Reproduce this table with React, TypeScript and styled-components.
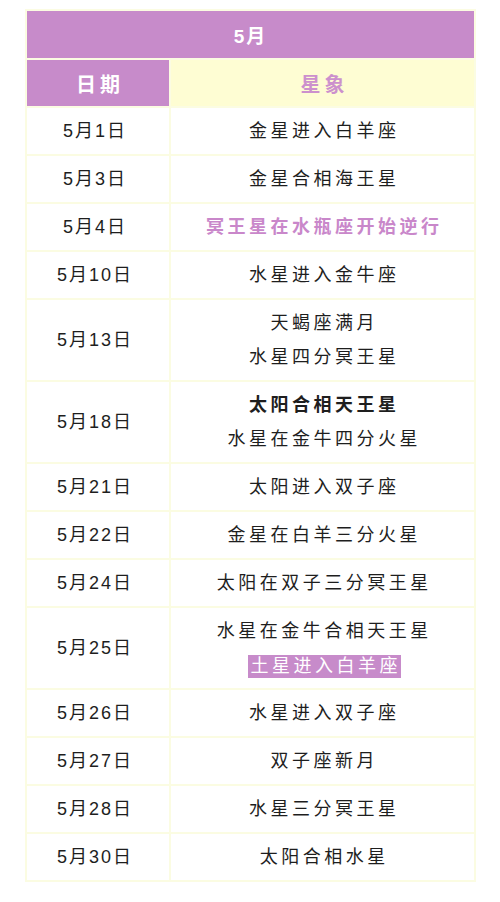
import { Fragment } from "react";
import styled, { createGlobalStyle } from "styled-components";

const GlobalStyle = createGlobalStyle`
  html, body {
    margin: 0;
    padding: 0;
    background: #ffffff;
  }
  body {
    font-family: "Liberation Sans", "Noto Sans CJK SC", sans-serif;
  }
`;

const purple = "#c78bca";
const cream = "#fbfce2";

const Page = styled.div`
  padding: 9px 0 0 25px;
`;

const Table = styled.div`
  width: 447px;
  display: grid;
  grid-template-columns: 142px 1fr;
  gap: 2px;
  padding: 2px;
  background: ${cream};
`;

const Title = styled.div`
  grid-column: 1 / 3;
  height: 47px;
  display: flex;
  align-items: center;
  justify-content: center;
  background: ${purple};
  color: #ffffff;
  font-size: 19px;
  font-weight: 700;
  letter-spacing: 2px;
`;

const HeadCell = styled.div<{ $alt?: boolean }>`
  height: 46px;
  display: flex;
  align-items: center;
  justify-content: center;
  background: ${({ $alt }) => ($alt ? "#fefdd3" : purple)};
  color: ${({ $alt }) => ($alt ? "#cc90cd" : "#ffffff")};
  font-size: 20px;
  font-weight: 700;
  letter-spacing: 4px;
  padding-left: 4px;
`;

const Cell = styled.div`
  background: #ffffff;
  display: flex;
  flex-direction: column;
  align-items: center;
  justify-content: center;
  gap: 1px;
  padding: 7px 0 6px 3.5px;
  color: #1e1e1e;
  font-size: 18px;
  line-height: 33px;
  letter-spacing: 3.5px;
`;

const DateCell = styled(Cell)`
  letter-spacing: 2px;
  padding-left: 0;
  padding-right: 6px;
`;

type Tone = "pink" | "bold" | "mark";

const Line = styled.span<{ $tone?: Tone }>`
  display: block;
  color: ${({ $tone }) =>
    $tone === "pink" ? "#c987ca" : $tone === "mark" ? "#ffffff" : "#1e1e1e"};
  font-weight: ${({ $tone }) => ($tone === "bold" || $tone === "pink" ? 700 : 400)};
`;

const Mark = styled.span`
  display: inline-block;
  background: ${purple};
  color: #ffffff;
  line-height: 23px;
  padding: 0 0 0 3px;
  vertical-align: middle;
`;

type Ev = { text: string; tone?: Tone };

const rows: { date: string; events: Ev[] }[] = [
  { date: "5月1日", events: [{ text: "金星进入白羊座" }] },
  { date: "5月3日", events: [{ text: "金星合相海王星" }] },
  { date: "5月4日", events: [{ text: "冥王星在水瓶座开始逆行", tone: "pink" }] },
  { date: "5月10日", events: [{ text: "水星进入金牛座" }] },
  { date: "5月13日", events: [{ text: "天蝎座满月" }, { text: "水星四分冥王星" }] },
  {
    date: "5月18日",
    events: [{ text: "太阳合相天王星", tone: "bold" }, { text: "水星在金牛四分火星" }],
  },
  { date: "5月21日", events: [{ text: "太阳进入双子座" }] },
  { date: "5月22日", events: [{ text: "金星在白羊三分火星" }] },
  { date: "5月24日", events: [{ text: "太阳在双子三分冥王星" }] },
  {
    date: "5月25日",
    events: [{ text: "水星在金牛合相天王星" }, { text: "土星进入白羊座", tone: "mark" }],
  },
  { date: "5月26日", events: [{ text: "水星进入双子座" }] },
  { date: "5月27日", events: [{ text: "双子座新月" }] },
  { date: "5月28日", events: [{ text: "水星三分冥王星" }] },
  { date: "5月30日", events: [{ text: "太阳合相水星" }] },
];

export default function App() {
  return (
    <Page>
      <GlobalStyle />
      <Table>
        <Title>5月</Title>
        <HeadCell>日期</HeadCell>
        <HeadCell $alt>星象</HeadCell>
        {rows.map((r) => (
          <Fragment key={r.date}>
            <DateCell>{r.date}</DateCell>
            <Cell>
              {r.events.map((e) => (
                <Line key={e.text} $tone={e.tone}>
                  {e.tone === "mark" ? <Mark>{e.text}</Mark> : e.text}
                </Line>
              ))}
            </Cell>
          </Fragment>
        ))}
      </Table>
    </Page>
  );
}
